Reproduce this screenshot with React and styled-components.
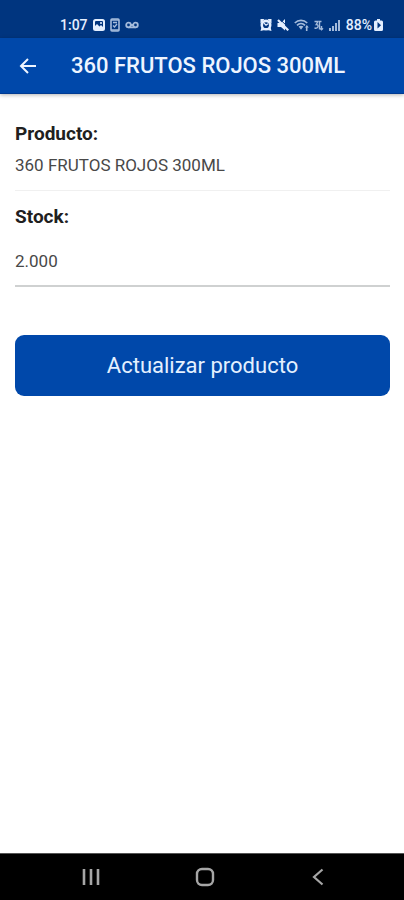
import React from "react";
import styled, { createGlobalStyle } from "styled-components";

const GlobalStyle = createGlobalStyle`
  *, *::before, *::after { box-sizing: border-box; }
  body {
    margin: 0;
    background: #fff;
    color: #202020;
    font-family: Roboto, "Liberation Sans", sans-serif;
  }
  button, input { font-family: inherit; }
`;

const Screen = styled.div`
  display: flex;
  flex-direction: column;
  min-height: 100vh;
`;

const StatusBar = styled.div`
  display: flex;
  justify-content: space-between;
  align-items: center;
  height: 38px;
  padding: 12px 21px 0 60px;
  background: #00357f;
  color: #e4efff;
`;

const StatusGroup = styled.div`
  display: flex;
  align-items: center;
  gap: ${(p) => p.$gap};
`;

const StatusText = styled.span`
  font-size: 14px;
  line-height: 16px;
  font-weight: 500;
`;

const BatteryLevel = styled.span`
  display: flex;
  align-items: center;
  gap: 2px;
`;

const StatusIcon = styled.svg`
  display: block;
  flex: none;
  opacity: ${(p) => (p.$dim ? 0.72 : 1)};
`;

const AppBar = styled.header`
  display: flex;
  align-items: center;
  gap: 31px;
  height: 56px;
  padding: 0 16px;
  background: #0048aa;
  border-bottom: 1px solid #003a92;
  color: #eef5ff;
  box-shadow: 0 1px 4px rgba(0, 0, 0, 0.3);
`;

const IconButton = styled.button`
  display: grid;
  place-items: center;
  width: ${(p) => p.$size};
  height: ${(p) => p.$size};
  padding: 0;
  border: 0;
  background: none;
  color: inherit;
  cursor: pointer;
`;

const Title = styled.h1`
  margin: 0;
  font-size: 22px;
  line-height: 28px;
  font-weight: 500;
  white-space: nowrap;
`;

const Content = styled.main`
  flex: 1;
  padding: 28px 14px 0 15px;
`;

const Field = styled.section`
  padding-bottom: 14px;
  margin-bottom: 14px;
  border-bottom: 1px solid #f0f0f0;
`;

const FieldName = styled.h2`
  margin: 0 0 8px;
  font-size: 19px;
  line-height: 24px;
  font-weight: 700;
`;

const FieldLabel = styled.label`
  display: block;
  font-size: 19px;
  line-height: 24px;
  font-weight: 700;
`;

const FieldValue = styled.p`
  margin: 0;
  font-size: 17px;
  line-height: 22px;
  color: #484848;
`;

const StockInput = styled.input`
  display: block;
  width: 100%;
  height: 58px;
  padding: 8px 0 0;
  border: 0;
  border-bottom: 2px solid #cfd1d1;
  border-radius: 0;
  outline: 0;
  background: none;
  font-size: 17px;
  color: #484848;
`;

const SubmitButton = styled.button`
  display: block;
  width: 100%;
  height: 61px;
  margin-top: 48px;
  border: 0;
  border-radius: 9px;
  background: #0048aa;
  color: #e4f0ff;
  font-size: 22px;
  cursor: pointer;
`;

const NavBar = styled.nav`
  display: flex;
  justify-content: space-between;
  align-items: center;
  height: 47px;
  padding: 0 70px 0 75px;
  border-top: 1px solid #555;
  background: #000;
  color: #a6a6a6;
`;

function PictureIcon() {
  return (
    <StatusIcon width="12" height="12" viewBox="0 0 12 12">
      <rect width="12" height="12" rx="2.5" fill="currentColor" />
      <rect x="2" y="2" width="8" height="7" rx="1" fill="#00357f" />
      <path d="M2 9V7l2-2 2.500 2.500L8 6l2 2v1z" fill="currentColor" />
      <circle cx="8" cy="4" r="1" fill="currentColor" />
    </StatusIcon>
  );
}

function DeviceIcon() {
  return (
    <StatusIcon $dim width="10" height="14" viewBox="0 0 10 14" fill="none" stroke="currentColor">
      <rect x="1" y="1" width="8" height="12" rx="1" strokeWidth="1.600" />
      <path d="M1 2h8M1 12h8" strokeWidth="1.500" />
      <path d="M3 7.500l1.500 1.500 2.500-3M3 4.500h4" strokeWidth="1.300" />
    </StatusIcon>
  );
}

function VoicemailIcon() {
  return (
    <StatusIcon $dim width="14" height="8" viewBox="0 0 14 8" fill="none" stroke="currentColor" strokeWidth="1.800">
      <circle cx="3.500" cy="4" r="2.300" />
      <circle cx="10.500" cy="4" r="2.300" />
      <path d="M3.500 6.300h7M5 4h4" />
    </StatusIcon>
  );
}

function AlarmIcon() {
  return (
    <StatusIcon width="12" height="12" viewBox="0 0 12 12">
      <path d="M0.500 0H4.500L0.500 4.500zM11.500 0H7.500L11.500 4.500zM0.500 12l1-4 3 3zM11.500 12l-1-4-3 3z" fill="currentColor" />
      <circle cx="6" cy="6" r="5.500" fill="currentColor" />
      <circle cx="6" cy="6.200" r="2.900" fill="#00357f" />
      <path d="M4 4.200l2 2 2-1.400" fill="none" stroke="currentColor" strokeWidth="1.200" />
    </StatusIcon>
  );
}

function MuteIcon() {
  return (
    <StatusIcon width="12" height="12" viewBox="0 0 12 12">
      <path d="M0.500 4H4l4-4v11.500L4 8H0.500z" fill="currentColor" />
      <path d="M3.200 0.500L12 9" stroke="#00357f" strokeWidth="1" />
      <path d="M1 1L11.300 11.300" stroke="currentColor" strokeWidth="2.200" />
    </StatusIcon>
  );
}

function WifiIcon() {
  return (
    <StatusIcon $dim width="15" height="12" viewBox="0 0 15 12">
      <g fill="none" stroke="currentColor" strokeWidth="1.700">
        <path d="M0.800 4c3.500-3.500 8.900-3.500 12.400 0" />
        <path d="M3 6.400c2.300-2.300 5.700-2.300 8 0" />
      </g>
      <path d="M4.600 7.600c1.300-1 3.500-1 4.800 0L7 10.800z" fill="currentColor" />
      <path d="M12.800 6l2 2.400h-1.300V12h-1.600V8.400H11z" fill="currentColor" />
    </StatusIcon>
  );
}

function DataIcon() {
  return (
    <StatusIcon $dim width="10" height="11" viewBox="0 0 10 11" fill="none" stroke="currentColor" strokeWidth="1.400">
      <path d="M0.500 1.500h3.500L2.200 4.500c3 0 2.500 4.500-1.700 3.500" />
      <path d="M5 1.500h2.500M5.500 2v7.500M7.500 6v4" />
      <path d="M6.200 8.200l1.300 1.500 1.500-1.500" />
    </StatusIcon>
  );
}

function SignalIcon() {
  return (
    <StatusIcon $dim width="12" height="11" viewBox="0 0 12 11" fill="currentColor">
      <rect x="0" y="8" width="2" height="3" />
      <rect x="3" y="6" width="2" height="5" />
      <rect x="6" y="3" width="2" height="8" />
      <rect x="9" y="0" width="2" height="11" />
    </StatusIcon>
  );
}

function BatteryIcon() {
  return (
    <StatusIcon width="9" height="12" viewBox="0 0 9 12">
      <path d="M3 0h3v1.500h1.500A1.500 1.500 0 0 1 9 3v7.500A1.500 1.500 0 0 1 7.500 12h-6A1.500 1.500 0 0 1 0 10.500V3a1.500 1.500 0 0 1 1.500-1.500H3z" fill="currentColor" />
      <path d="M3.500 3v6.500L7 6.200z" fill="#00357f" />
    </StatusIcon>
  );
}

export default function App() {
  return (
    <>
      <GlobalStyle />
      <Screen>
        <StatusBar>
          <StatusGroup $gap="5px">
            <StatusText>1:07</StatusText>
            <PictureIcon />
            <DeviceIcon />
            <VoicemailIcon />
          </StatusGroup>
          <StatusGroup $gap="5px">
            <AlarmIcon />
            <MuteIcon />
            <WifiIcon />
            <DataIcon />
            <SignalIcon />
            <BatteryLevel>
              <StatusText>88%</StatusText>
              <BatteryIcon />
            </BatteryLevel>
          </StatusGroup>
        </StatusBar>
        <AppBar>
          <IconButton $size="24px" type="button" aria-label="Volver">
            <svg width="24" height="24" viewBox="0 0 24 24" fill="none" stroke="currentColor" strokeWidth="2">
              <path d="M20 12H5.500M12 5L5 12l7 7" />
            </svg>
          </IconButton>
          <Title>360 FRUTOS ROJOS 300ML</Title>
        </AppBar>
        <Content>
          <Field>
            <FieldName>Producto:</FieldName>
            <FieldValue>360 FRUTOS ROJOS 300ML</FieldValue>
          </Field>
          <form onSubmit={(e) => e.preventDefault()}>
            <FieldLabel htmlFor="stock">Stock:</FieldLabel>
            <StockInput id="stock" type="text" inputMode="decimal" defaultValue="2.000" />
            <SubmitButton type="submit">Actualizar producto</SubmitButton>
          </form>
        </Content>
        <NavBar aria-label="Sistema">
          <IconButton $size="32px" type="button" aria-label="Recientes">
            <svg width="18" height="18" viewBox="0 0 18 18" stroke="currentColor" strokeWidth="2.600">
              <path d="M2 1v16M9 1v16M16 1v16" />
            </svg>
          </IconButton>
          <IconButton $size="32px" type="button" aria-label="Inicio">
            <svg width="20" height="20" viewBox="0 0 20 20" fill="none" stroke="currentColor" strokeWidth="2.400">
              <rect x="2" y="2" width="16" height="16" rx="5" />
            </svg>
          </IconButton>
          <IconButton $size="32px" type="button" aria-label="Atrás">
            <svg width="12" height="18" viewBox="0 0 12 18" fill="none" stroke="currentColor" strokeWidth="2.200">
              <path d="M10.500 1.500L2 9l8.500 7.500" />
            </svg>
          </IconButton>
        </NavBar>
      </Screen>
    </>
  );
}
